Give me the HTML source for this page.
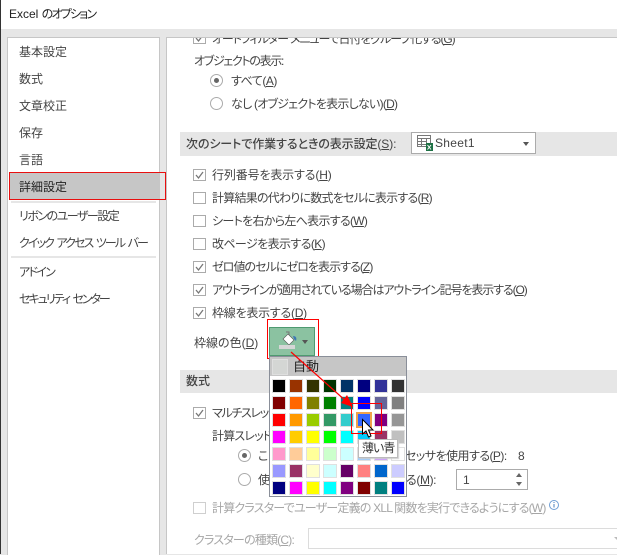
<!DOCTYPE html>
<html lang="ja"><head><meta charset="utf-8"><title>Excel のオプション</title>
<style>
html,body{margin:0;padding:0}
body{width:617px;height:554px;position:relative;overflow:hidden;background:#e6e6e6;font-family:"Liberation Sans","Noto Sans CJK JP",sans-serif;font-size:12px;color:#444;font-feature-settings:"palt";}
.a{position:absolute}
.t{position:absolute;white-space:nowrap;line-height:16px;height:16px;margin-top:1px}
u{text-underline-offset:1px}
.cb{position:absolute;left:193px;width:11px;height:10px;margin-top:1px;border:1px solid #ababab;background:#fff}
.cb svg{position:absolute;left:0;top:0}
.r{position:absolute;width:11px;height:11px;border:1px solid #ababab;border-radius:50%;background:#fff}
.r.on:after{content:"";position:absolute;left:3px;top:3px;width:5px;height:5px;border-radius:50%;background:#666}
.sw{width:12px;height:12px;border:1px solid #e0e0e0}
.band{position:absolute;left:180px;right:0;background:#e6e6e6}
.d{color:#a6a6a6}
#g{position:absolute;left:272px;top:379px;display:grid;grid-template-columns:repeat(8,14px);grid-auto-rows:14px;gap:3px}
</style></head><body>
<div class="a" style="left:0;top:0;width:1px;height:554px;background:#333"></div>
<div class="a" style="left:1px;top:0;width:616px;height:29px;background:#fff"></div>
<div class="t" style="left:9px;top:5px;color:#222">Excel <span style="letter-spacing:-1.8px">のオプション</span></div>

<div class="a" style="left:7px;top:37px;width:151px;height:517px;background:#fff;border:1px solid #c6c6c6;border-bottom:0"></div>
<div class="a" style="left:166px;top:37px;width:451px;height:517px;background:#fff;border-left:1px solid #c6c6c6;border-top:1px solid #c6c6c6;box-sizing:border-box"></div>

<div class="t" style="left:19px;top:43px">基本設定</div>
<div class="t" style="left:19px;top:70px">数式</div>
<div class="t" style="left:19px;top:97px">文章校正</div>
<div class="t" style="left:19px;top:124px">保存</div>
<div class="t" style="left:19px;top:151px">言語</div>
<div class="a" style="left:9px;top:172px;width:150px;height:28px;background:#c6c6c6"></div>
<div class="t" style="left:19px;top:178px;color:#222">詳細設定</div>
<div class="a" style="left:9px;top:172px;width:155px;height:26px;border:1px solid #e81010"></div>
<div class="a" style="left:11px;top:201px;width:145px;height:2px;background:#e6e6e6"></div>
<div class="t" style="left:19px;top:207px;letter-spacing:-1.5px">リボンのユーザー設定</div>
<div class="t" style="left:19px;top:234px;letter-spacing:-1.9px;word-spacing:2px">クイック アクセス ツール バー</div>
<div class="a" style="left:11px;top:256px;width:145px;height:2px;background:#e6e6e6"></div>
<div class="t" style="left:19px;top:263px;letter-spacing:-1.7px">アドイン</div>
<div class="t" style="left:19px;top:290px;letter-spacing:-2px;word-spacing:2px">セキュリティ センター</div>

<div class="a" style="left:167px;top:38px;width:450px;height:516px;overflow:hidden">
  <div class="cb" style="left:26px;top:-7px"><svg width="11" height="10"><path d="M2 5l2.500 3L9 2" fill="none" stroke="#777" stroke-width="1.3"/></svg></div>
  <div class="t" style="left:45px;top:-8px;letter-spacing:-1.1px">オートフィルター メニューで日付をグループ化する(<u>G</u>)</div>
</div>
<div class="t" style="left:194px;top:52px;letter-spacing:-1.3px">オブジェクトの表示:</div>
<div class="r on" style="left:210px;top:74px"></div>
<div class="t" style="left:231px;top:72px;letter-spacing:-.5px">すべて(<u>A</u>)</div>
<div class="r" style="left:210px;top:97px"></div>
<div class="t" style="left:231px;top:95px;letter-spacing:-.76px">なし (オブジェクトを表示しない)(<u>D</u>)</div>

<div class="band" style="top:132px;height:24px"></div>
<div class="t" style="left:186px;top:135px;font-weight:500;letter-spacing:-.1px">次のシートで作業するときの表示設定(<u>S</u>):</div>
<div class="a" style="left:411px;top:132px;width:123px;height:20px;background:#fff;border:1px solid #ababab"></div>
<svg class="a" style="left:417px;top:135px" width="18" height="17"><path d="M.5 .5h13v11h-13zM.5 3.500h13M.5 6.500h9M.5 9.500h9M4.500 3.500v8M9.500 3.500v8" fill="none" stroke="#777"/><rect x="9" y="8" width="7" height="8" fill="#1e7145"/><path d="M10.500 10l3.500 4.500M14 10l-3.500 4.500" stroke="#fff"/></svg>
<div class="t" style="left:435px;top:134px;letter-spacing:.3px">Sheet1</div>
<div class="a" style="left:523px;top:142px;border-style:solid;border-width:4px 3.500px 0;border-color:#555 transparent transparent"></div>

<div class="cb" style="top:168px"><svg width="11" height="10"><path d="M2 5l2.500 3L9 2" fill="none" stroke="#777" stroke-width="1.3"/></svg></div>
<div class="t" style="left:212px;top:166px;letter-spacing:-.15px">行列番号を表示する(<u>H</u>)</div>
<div class="cb" style="top:191px"></div>
<div class="t" style="left:212px;top:189px;letter-spacing:-.77px">計算結果の代わりに数式をセルに表示する(<u>R</u>)</div>
<div class="cb" style="top:214px"></div>
<div class="t" style="left:212px;top:212px;letter-spacing:-.7px">シートを右から左へ表示する(<u>W</u>)</div>
<div class="cb" style="top:237px"></div>
<div class="t" style="left:212px;top:235px;letter-spacing:-.6px">改ページを表示する(<u>K</u>)</div>
<div class="cb" style="top:260px"><svg width="11" height="10"><path d="M2 5l2.500 3L9 2" fill="none" stroke="#777" stroke-width="1.3"/></svg></div>
<div class="t" style="left:212px;top:258px;letter-spacing:-.95px">ゼロ値のセルにゼロを表示する(<u>Z</u>)</div>
<div class="cb" style="top:283px"><svg width="11" height="10"><path d="M2 5l2.500 3L9 2" fill="none" stroke="#777" stroke-width="1.3"/></svg></div>
<div class="t" style="left:212px;top:281px;letter-spacing:-1.1px">アウトラインが適用されている場合はアウトライン記号を表示する(<u>O</u>)</div>
<div class="cb" style="top:306px"><svg width="11" height="10"><path d="M2 5l2.500 3L9 2" fill="none" stroke="#777" stroke-width="1.3"/></svg></div>
<div class="t" style="left:212px;top:304px;letter-spacing:-.25px">枠線を表示する(<u>D</u>)</div>
<div class="t" style="left:194px;top:334px">枠線の色(<u>D</u>)</div>

<div class="a" style="left:269px;top:327px;width:44px;height:27px;background:#8bc2a1;border:1px solid #4f9a70"></div>
<svg class="a" style="left:278px;top:331px" width="22" height="20"><path d="M8 1h3v3" fill="none" stroke="#777"/><path d="M10 3l6 6-5 5-6-6z" fill="#fff" stroke="#555" stroke-width=".6"/><path d="M15 5c3 0 4 2 3 5l-2-2z" fill="#3c78b4"/><rect x="1" y="14" width="16" height="4" fill="#d6d6d6"/></svg>
<div class="a" style="left:302px;top:340px;border-style:solid;border-width:4px 3.500px 0;border-color:#555 transparent transparent"></div>
<div class="a" style="left:267px;top:319px;width:50px;height:38px;border:1px solid #f00"></div>

<div class="band" style="top:370px;height:23px"></div>
<div class="t" style="left:186px;top:372px;font-weight:500">数式</div>
<div class="cb" style="top:406px"><svg width="11" height="10"><path d="M2 5l2.500 3L9 2" fill="none" stroke="#777" stroke-width="1.3"/></svg></div>
<div class="t" style="left:212px;top:404px;letter-spacing:-1.3px">マルチスレッド計算を行う(<u>U</u>)</div>
<div class="t" style="left:212px;top:427px;letter-spacing:-.8px">計算スレッドの数</div>
<div class="r on" style="left:238px;top:449px"></div>
<div class="t" style="left:258px;top:447px">この</div>
<div class="t" style="left:405px;top:447px;letter-spacing:-.55px">セッサを使用する(<u>P</u>):</div>
<div class="t" style="left:518px;top:447px">8</div>
<div class="r" style="left:238px;top:473px"></div>
<div class="t" style="left:258px;top:471px">使</div>
<div class="t" style="left:406px;top:471px;letter-spacing:-.4px">る(<u>M</u>):</div>
<div class="a" style="left:456px;top:469px;width:70px;height:19px;background:#fff;border:1px solid #ababab"></div>
<div class="t" style="left:463px;top:471px">1</div>
<div class="a" style="left:516px;top:473px;border-style:solid;border-width:0 3px 4px;border-color:transparent transparent #666"></div>
<div class="a" style="left:516px;top:482px;border-style:solid;border-width:4px 3px 0;border-color:#666 transparent transparent"></div>

<div class="cb" style="top:501px;border-color:#cfcfcf"></div>
<div class="t d" style="left:212px;top:499px;letter-spacing:-.8px">計算クラスターでユーザー定義の XLL 関数を実行できるようにする(<u>W</u>)</div>
<svg class="a" style="left:548px;top:499px" width="12" height="12"><circle cx="6" cy="6" r="4.500" fill="none" stroke="#6f9ed4"/><path d="M6 5v3.500M6 3v1" stroke="#4a7fbe"/></svg>
<div class="t d" style="left:194px;top:531px;letter-spacing:-.8px">クラスターの種類(<u>C</u>):</div>
<div class="a" style="left:308px;top:528px;width:320px;height:19px;background:#fff;border:1px solid #dcdcdc"></div>
<div class="a" style="left:614px;top:537px;border-style:solid;border-width:3px 3px 0;border-color:#bbb transparent transparent"></div>

<div class="a" style="left:269px;top:356px;width:136px;height:139px;background:#fff;border:1px solid #8a8f99"></div>
<div class="a" style="left:270px;top:357px;width:136px;height:19px;background:#c6c6c6"></div>
<div class="a" style="left:272px;top:359px;width:14px;height:14px;background:#d4d6d4;border:1px solid #dfdfdf"></div>
<div class="t" style="left:293px;top:358px;color:#222;font-size:13px">自動</div>
<div id="g">
<div class="sw" style="background:#000000"></div><div class="sw" style="background:#993300"></div><div class="sw" style="background:#333300"></div><div class="sw" style="background:#003300"></div><div class="sw" style="background:#003366"></div><div class="sw" style="background:#000080"></div><div class="sw" style="background:#333399"></div><div class="sw" style="background:#333333"></div>
<div class="sw" style="background:#800000"></div><div class="sw" style="background:#ff6600"></div><div class="sw" style="background:#808000"></div><div class="sw" style="background:#008000"></div><div class="sw" style="background:#008080"></div><div class="sw" style="background:#0000ff"></div><div class="sw" style="background:#666699"></div><div class="sw" style="background:#808080"></div>
<div class="sw" style="background:#ff0000"></div><div class="sw" style="background:#ff9900"></div><div class="sw" style="background:#99cc00"></div><div class="sw" style="background:#339966"></div><div class="sw" style="background:#33cccc"></div><div class="sw" style="background:#3366ff;border-color:#f0a24a;outline:1px solid #f0a24a"></div><div class="sw" style="background:#800080"></div><div class="sw" style="background:#969696"></div>
<div class="sw" style="background:#ff00ff"></div><div class="sw" style="background:#ffcc00"></div><div class="sw" style="background:#ffff00"></div><div class="sw" style="background:#00ff00"></div><div class="sw" style="background:#00ffff"></div><div class="sw" style="background:#00ccff"></div><div class="sw" style="background:#993366"></div><div class="sw" style="background:#c0c0c0"></div>
<div class="sw" style="background:#ff99cc"></div><div class="sw" style="background:#ffcc99"></div><div class="sw" style="background:#ffff99"></div><div class="sw" style="background:#ccffcc"></div><div class="sw" style="background:#ccffff"></div><div class="sw" style="background:#99ccff"></div><div class="sw" style="background:#cc99ff"></div><div class="sw" style="background:#ffffff"></div>
<div class="sw" style="background:#9999ff"></div><div class="sw" style="background:#993366"></div><div class="sw" style="background:#ffffcc"></div><div class="sw" style="background:#ccffff"></div><div class="sw" style="background:#660066"></div><div class="sw" style="background:#ff8080"></div><div class="sw" style="background:#0066cc"></div><div class="sw" style="background:#ccccff"></div>
<div class="sw" style="background:#000080"></div><div class="sw" style="background:#ff00ff"></div><div class="sw" style="background:#ffff00"></div><div class="sw" style="background:#00ffff"></div><div class="sw" style="background:#800080"></div><div class="sw" style="background:#800000"></div><div class="sw" style="background:#008080"></div><div class="sw" style="background:#0000ff"></div>
</div>

<div class="a" style="left:351px;top:403px;width:29px;height:29px;border:1px solid #f00"></div>
<svg class="a" style="left:285px;top:348px" width="80" height="70"><path d="M6 4L62 54" stroke="#f00" stroke-width="1.200" fill="none"/><path d="M68 59L56 55 62 47z" fill="#f00"/></svg>

<div class="a" style="left:358px;top:439px;width:38px;height:17px;background:#fff;border:1px solid #bbb;box-shadow:1px 1px 1px #ccc"></div>
<div class="t" style="left:362px;top:439px;color:#333;letter-spacing:-1px">薄い青</div>
<svg class="a" style="left:360px;top:418px" width="16" height="22"><path d="M2.500 1.500V16l3.500-3 2.500 6 2.500-1-2.500-6H13z" fill="#fff" stroke="#000"/></svg>
</body></html>
